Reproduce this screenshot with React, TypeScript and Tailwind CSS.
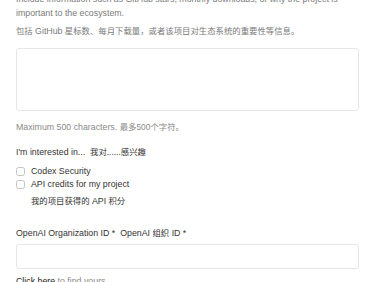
function Zh({ children }: { children: string }) {
  return <span className="text-[8.4px]">{children}</span>
}

export default function App() {
  return (
    <div className="w-[380px] h-[282px] overflow-hidden bg-white font-['Liberation_Sans','Noto_Sans_CJK_SC',sans-serif]">
      <div className="-mt-[8px] pl-4 w-[359px]">
        <p className="text-[8.8px] leading-[14px] text-[#7a7a7a]">
          Include information such as GitHub stars, monthly downloads, or why the project is important to the ecosystem.
        </p>
        <p className="mt-[4px] text-[8.4px] leading-[14px] text-[#7a7a7a]">
          包括 <span className="text-[8.8px]">GitHub</span> 星标数、每月下载量，或者该项目对生态系统的重要性等信息。
        </p>
        <textarea className="mt-[10px] block h-[63px] w-full resize-none rounded-[3px] border border-[#e6e6e6] bg-white" />
        <p className="mt-[9px] text-[8.8px] leading-[14px] text-[#8a8a8a]">
          Maximum 500 characters. <Zh>最多500个字符。</Zh>
        </p>
        <p className="mt-[11px] text-[8.8px] leading-[14px] text-[#333]">
          I'm interested in...&nbsp; <Zh>我对......感兴趣</Zh>
        </p>
        <div className="mt-[6px] flex flex-col">
          <label className="flex items-center gap-[6px] text-[8.8px] leading-[13px] text-[#333]">
            <span className="h-[9px] w-[9px] rounded-[2.5px] border border-[#c4c4c4]" />
            Codex Security
          </label>
          <label className="flex items-center gap-[6px] text-[8.8px] leading-[13px] text-[#333]">
            <span className="h-[9px] w-[9px] rounded-[2.5px] border border-[#c4c4c4]" />
            API credits for my project
          </label>
          <p className="mt-[3px] pl-[15px] text-[8.4px] leading-[14px] text-[#333]">
            我的项目获得的 <span className="text-[8.8px]">API</span> 积分
          </p>
        </div>
        <p className="mt-[18px] text-[8.8px] leading-[14px] text-[#333]">
          OpenAI Organization ID *&nbsp; OpenAI <Zh>组织</Zh> ID *
        </p>
        <input className="mt-[4px] block h-[25px] w-full rounded-[3px] border border-[#e6e6e6]" />
        <p className="mt-[5px] text-[8.8px] leading-[14px] text-[#888]">
          <span className="text-[#222]">Click here</span> to find yours.
        </p>
      </div>
    </div>
  )
}
